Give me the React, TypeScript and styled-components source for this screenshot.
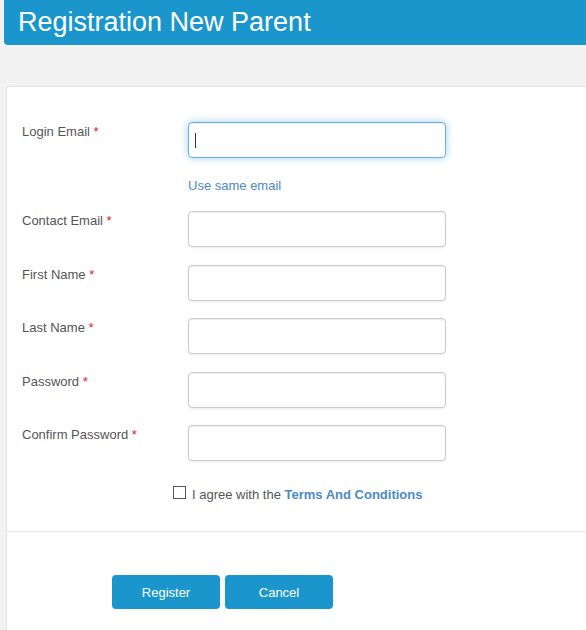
import React from "react";
import styled, { createGlobalStyle, css } from "styled-components";

const GlobalStyle = createGlobalStyle`
  html, body {
    margin: 0;
    padding: 0;
    background: #f2f2f2;
    font-family: "Liberation Sans", Arial, sans-serif;
  }
`;

const Page = styled.div`
  min-height: 630px;
  display: flex;
  flex-direction: column;
`;

const Header = styled.div`
  margin-left: 4px;
  height: 45px;
  background: #1a96cc;
  border-radius: 0 0 0 4px;
  display: flex;
  align-items: center;
`;

const Title = styled.h1`
  margin: 0 0 0 14px;
  font-size: 27px;
  font-weight: normal;
  color: #fff;
  line-height: 1;
  padding-bottom: 1px;
`;

const Panel = styled.div`
  margin: 41px 0 0 6px;
  flex: 1;
  background: #fff;
  border: 1px solid #e3e3e3;
  border-right: none;
  border-bottom: none;
  border-radius: 4px 0 0 0;
`;

const Body = styled.div`
  padding: 35px 15px 29px;
`;

const Row = styled.div`
  display: grid;
  grid-template-columns: 166px 258px;
  margin-bottom: 17.5px;
`;

const Label = styled.label`
  font-size: 13px;
  line-height: 20px;
  color: #555;
  padding-top: 0;
`;

const Required = styled.span`
  color: #e02222;
`;

const Field = styled.div`
  position: relative;
  display: flex;
  flex-direction: column;
`;

const Input = styled.input<{ $focused?: boolean }>`
  box-sizing: border-box;
  width: 258px;
  height: 36px;
  border: 1px solid #ccc;
  border-radius: 4px;
  padding: 6px 8px;
  font-size: 14px;
  font-family: inherit;
  color: #333;
  outline: none;
  box-shadow: inset 0 1px 1px rgba(0, 0, 0, 0.075), 0 1px 2px rgba(0, 0, 0, 0.08);
  ${({ $focused }) =>
    $focused &&
    css`
      border-color: #66afe9;
      box-shadow: inset 0 1px 1px rgba(0, 0, 0, 0.075), 0 0 8px rgba(102, 175, 233, 0.6);
    `}
`;

const Caret = styled.span`
  position: absolute;
  left: 7px;
  top: 11px;
  width: 1px;
  height: 15px;
  background: #333;
  pointer-events: none;
`;

const SameEmail = styled.a`
  display: block;
  padding-top: 19.5px;
  font-size: 13px;
  line-height: 16px;
  color: #4a8bc4;
  text-decoration: none;
`;

const AgreeRow = styled.div`
  display: flex;
  align-items: center;
  gap: 6px;
  margin: 26px 0 0 151px;
  font-size: 13px;
  color: #555;
`;

const Checkbox = styled.span`
  box-sizing: border-box;
  width: 13px;
  height: 13px;
  border: 1px solid #555;
  background: #fff;
  margin-top: -4px;
`;

const Terms = styled.a`
  color: #4a8bc4;
  font-weight: bold;
  text-decoration: none;
`;

const Footer = styled.div`
  border-top: 1px solid #e5e5e5;
  padding: 43px 0 20px 105px;
  display: flex;
  gap: 5px;
`;

const Button = styled.button`
  width: 108px;
  height: 34px;
  border: none;
  border-radius: 4px;
  background: #1a96cc;
  color: #fff;
  font-family: inherit;
  font-size: 13px;
  cursor: pointer;
`;

const fields = [
  "Contact Email",
  "First Name",
  "Last Name",
  "Password",
  "Confirm Password",
];

export default function App() {
  return (
    <Page>
      <GlobalStyle />
      <Header>
        <Title>Registration New Parent</Title>
      </Header>
      <Panel>
        <Body>
          <Row>
            <Label>
              Login Email <Required>*</Required>
            </Label>
            <Field>
              <Input $focused type="text" />
              <Caret />
              <SameEmail href="#">Use same email</SameEmail>
            </Field>
          </Row>
          {fields.map((name) => (
            <Row key={name}>
              <Label>
                {name} <Required>*</Required>
              </Label>
              <Input type={name.includes("Password") ? "password" : "text"} />
            </Row>
          ))}
          <AgreeRow>
            <Checkbox />
            <span>
              I agree with the <Terms href="#">Terms And Conditions</Terms>
            </span>
          </AgreeRow>
        </Body>
        <Footer>
          <Button>Register</Button>
          <Button>Cancel</Button>
        </Footer>
      </Panel>
    </Page>
  );
}
